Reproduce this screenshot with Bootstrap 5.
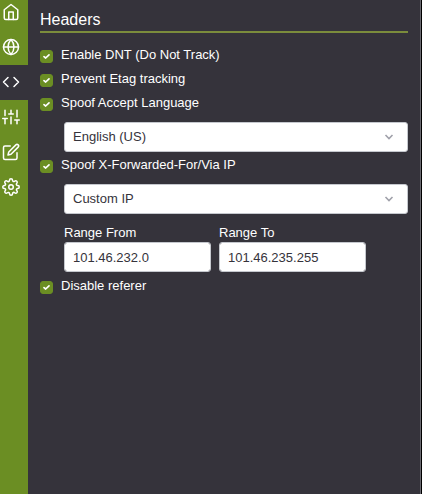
<!DOCTYPE html>
<html lang="en">
<head>
<meta charset="utf-8">
<meta name="viewport" content="width=device-width, initial-scale=1">
<title>Headers</title>
<link href="https://cdn.jsdelivr.net/npm/bootstrap@5.3.0/dist/css/bootstrap.min.css" rel="stylesheet">
<style>
:root { --panel: #35333b; --accent: #6b8e23; --ink: #35333b; }
body { background: var(--panel); color: #fff; font-family: "Liberation Sans", Arial, sans-serif; font-size: 13px; line-height: 18px; }
.panel-edge { border-right: 1px solid #6a6970; box-shadow: 1px 0 #000; margin-right: 1px; }
.sidebar { width: 28px; background: var(--accent); }
.sidebar .tab { height: 35px; padding-left: 2px; padding-bottom: 1px; color: #fff; }
.sidebar .tab:first-child { height: 30px; padding-bottom: 6px; }
.sidebar .tab.active { background: var(--panel); }
.tab svg { width: 18px; height: 18px; fill: none; stroke: currentColor; stroke-width: 2; stroke-linecap: round; stroke-linejoin: round; }
.settings { padding: 10px 12px; }
.title { font-size: 16px; line-height: 20px; padding-bottom: 1px; border-bottom: 2px solid #7b8c3c; margin-bottom: 11px; }
.option { height: 24px; gap: 8px; }
.option .form-check-input { width: 13px; height: 13px; margin: 0; border-radius: 3px; box-shadow: none; }
.option .form-check-input:checked { background-color: var(--accent); border-color: var(--accent); background-size: 13px 13px;
  background-image: url("data:image/svg+xml,%3Csvg xmlns='http://www.w3.org/2000/svg' viewBox='0 0 13 13'%3E%3Cpath d='M4 6.600 5.700 8 9 4.800' fill='none' stroke='white' stroke-width='1.7' stroke-linecap='round' stroke-linejoin='round'/%3E%3C/svg%3E"); }
.option label { padding-bottom: 2px; }
.nested { margin-left: 24px; }
.choice { margin-top: 6px; margin-bottom: 2px; }
.field { height: 30px; padding: 4px 8px; font-size: 13px; line-height: 20px; color: var(--ink); background-color: #fff; border: 1px solid #c5c8ce; border-radius: 3px; }
.form-select.field { background-position: right 12px center; background-size: 12px 12px;
  background-image: url("data:image/svg+xml,%3Csvg xmlns='http://www.w3.org/2000/svg' viewBox='0 0 12 12'%3E%3Cpath d='m2.500 4 3.500 3.500 3.500-3.500' fill='none' stroke='%23a0a1aa' stroke-width='1.6'/%3E%3C/svg%3E"); }
.range { margin-top: 10px; margin-bottom: 3px; gap: 8px; }
.range .part { flex: 0 1 147px; min-width: 0; }
.range label { display: block; }
</style>
</head>
<body>
<div class="panel-edge d-flex min-vh-100">
  <nav class="sidebar d-flex flex-column flex-shrink-0" aria-label="Sections">
    <a class="tab d-flex align-items-center" href="#home" aria-label="Home"><svg viewBox="0 0 24 24"><path d="M3 9l9-7 9 7v11a2 2 0 0 1-2 2H5a2 2 0 0 1-2-2z"/><path d="M9 22V12h6v10"/></svg></a>
    <a class="tab d-flex align-items-center" href="#profile" aria-label="Profile"><svg viewBox="0 0 24 24"><circle cx="12" cy="12" r="10"/><path d="M2 12h20M12 2a15.3 15.3 0 0 1 4 10 15.3 15.3 0 0 1-4 10 15.3 15.3 0 0 1-4-10 15.3 15.3 0 0 1 4-10z"/></svg></a>
    <a class="tab active d-flex align-items-center" href="#headers" aria-label="Headers" aria-current="page"><svg viewBox="0 0 24 24"><path d="M16 18l6-6-6-6M8 6l-6 6 6 6"/></svg></a>
    <a class="tab d-flex align-items-center" href="#options" aria-label="Options"><svg viewBox="0 0 24 24"><path d="M4 21v-7M4 10V3M12 21v-9M12 8V3M20 21v-5M20 12V3M1 14h6M9 8h6M17 16h6"/></svg></a>
    <a class="tab d-flex align-items-center" href="#whitelist" aria-label="Whitelist"><svg viewBox="0 0 24 24"><path d="M11 4H4a2 2 0 0 0-2 2v14a2 2 0 0 0 2 2h14a2 2 0 0 0 2-2v-7"/><path d="M18.5 2.5a2.121 2.121 0 0 1 3 3L12 15l-4 1 1-4 9.500-9.500z"/></svg></a>
    <a class="tab d-flex align-items-center" href="#settings" aria-label="Settings"><svg viewBox="0 0 24 24"><circle cx="12" cy="12" r="3"/><path d="M19.400 15a1.650 1.650 0 0 0 .33 1.820l.06.06a2 2 0 0 1 0 2.830 2 2 0 0 1-2.830 0l-.06-.06a1.650 1.650 0 0 0-1.820-.33 1.650 1.650 0 0 0-1 1.510V21a2 2 0 0 1-2 2 2 2 0 0 1-2-2v-.09A1.650 1.650 0 0 0 9 19.400a1.650 1.650 0 0 0-1.820.33l-.06.06a2 2 0 0 1-2.830 0 2 2 0 0 1 0-2.830l.06-.06a1.650 1.650 0 0 0 .33-1.820 1.650 1.650 0 0 0-1.510-1H3a2 2 0 0 1-2-2 2 2 0 0 1 2-2h.09A1.650 1.650 0 0 0 4.600 9a1.650 1.650 0 0 0-.33-1.820l-.06-.06a2 2 0 0 1 0-2.830 2 2 0 0 1 2.830 0l.06.06a1.650 1.650 0 0 0 1.820.33H9a1.650 1.650 0 0 0 1-1.510V3a2 2 0 0 1 2-2 2 2 0 0 1 2 2v.09a1.650 1.650 0 0 0 1 1.510 1.650 1.650 0 0 0 1.820-.33l.06-.06a2 2 0 0 1 2.830 0 2 2 0 0 1 0 2.830l-.06.06a1.650 1.650 0 0 0-.33 1.820V9a1.650 1.650 0 0 0 1.510 1H21a2 2 0 0 1 2 2 2 2 0 0 1-2 2h-.09a1.650 1.650 0 0 0-1.510 1z"/></svg></a>
  </nav>
  <main class="settings flex-grow-1">
    <h1 class="title fw-normal">Headers</h1>
    <form>
      <div class="option d-flex align-items-center"><input class="form-check-input" type="checkbox" id="dnt" checked><label for="dnt">Enable DNT (Do Not Track)</label></div>
      <div class="option d-flex align-items-center"><input class="form-check-input" type="checkbox" id="etag" checked><label for="etag">Prevent Etag tracking</label></div>
      <div class="option d-flex align-items-center"><input class="form-check-input" type="checkbox" id="lang" checked><label for="lang">Spoof Accept Language</label></div>
      <div class="nested choice">
        <select class="form-select field" aria-label="Accept language"><option>English (US)</option></select>
      </div>
      <div class="option d-flex align-items-center"><input class="form-check-input" type="checkbox" id="via" checked><label for="via">Spoof X-Forwarded-For/Via IP</label></div>
      <div class="nested choice">
        <select class="form-select field" aria-label="Spoofed IP type"><option>Custom IP</option></select>
      </div>
      <div class="nested range d-flex">
        <div class="part"><label for="from">Range From</label><input class="form-control field" type="text" id="from" value="101.46.232.0"></div>
        <div class="part"><label for="to">Range To</label><input class="form-control field" type="text" id="to" value="101.46.235.255"></div>
      </div>
      <div class="option d-flex align-items-center"><input class="form-check-input" type="checkbox" id="referer" checked><label for="referer">Disable referer</label></div>
    </form>
  </main>
</div>
<script src="https://cdn.jsdelivr.net/npm/bootstrap@5.3.0/dist/js/bootstrap.bundle.min.js"></script>
</body>
</html>
